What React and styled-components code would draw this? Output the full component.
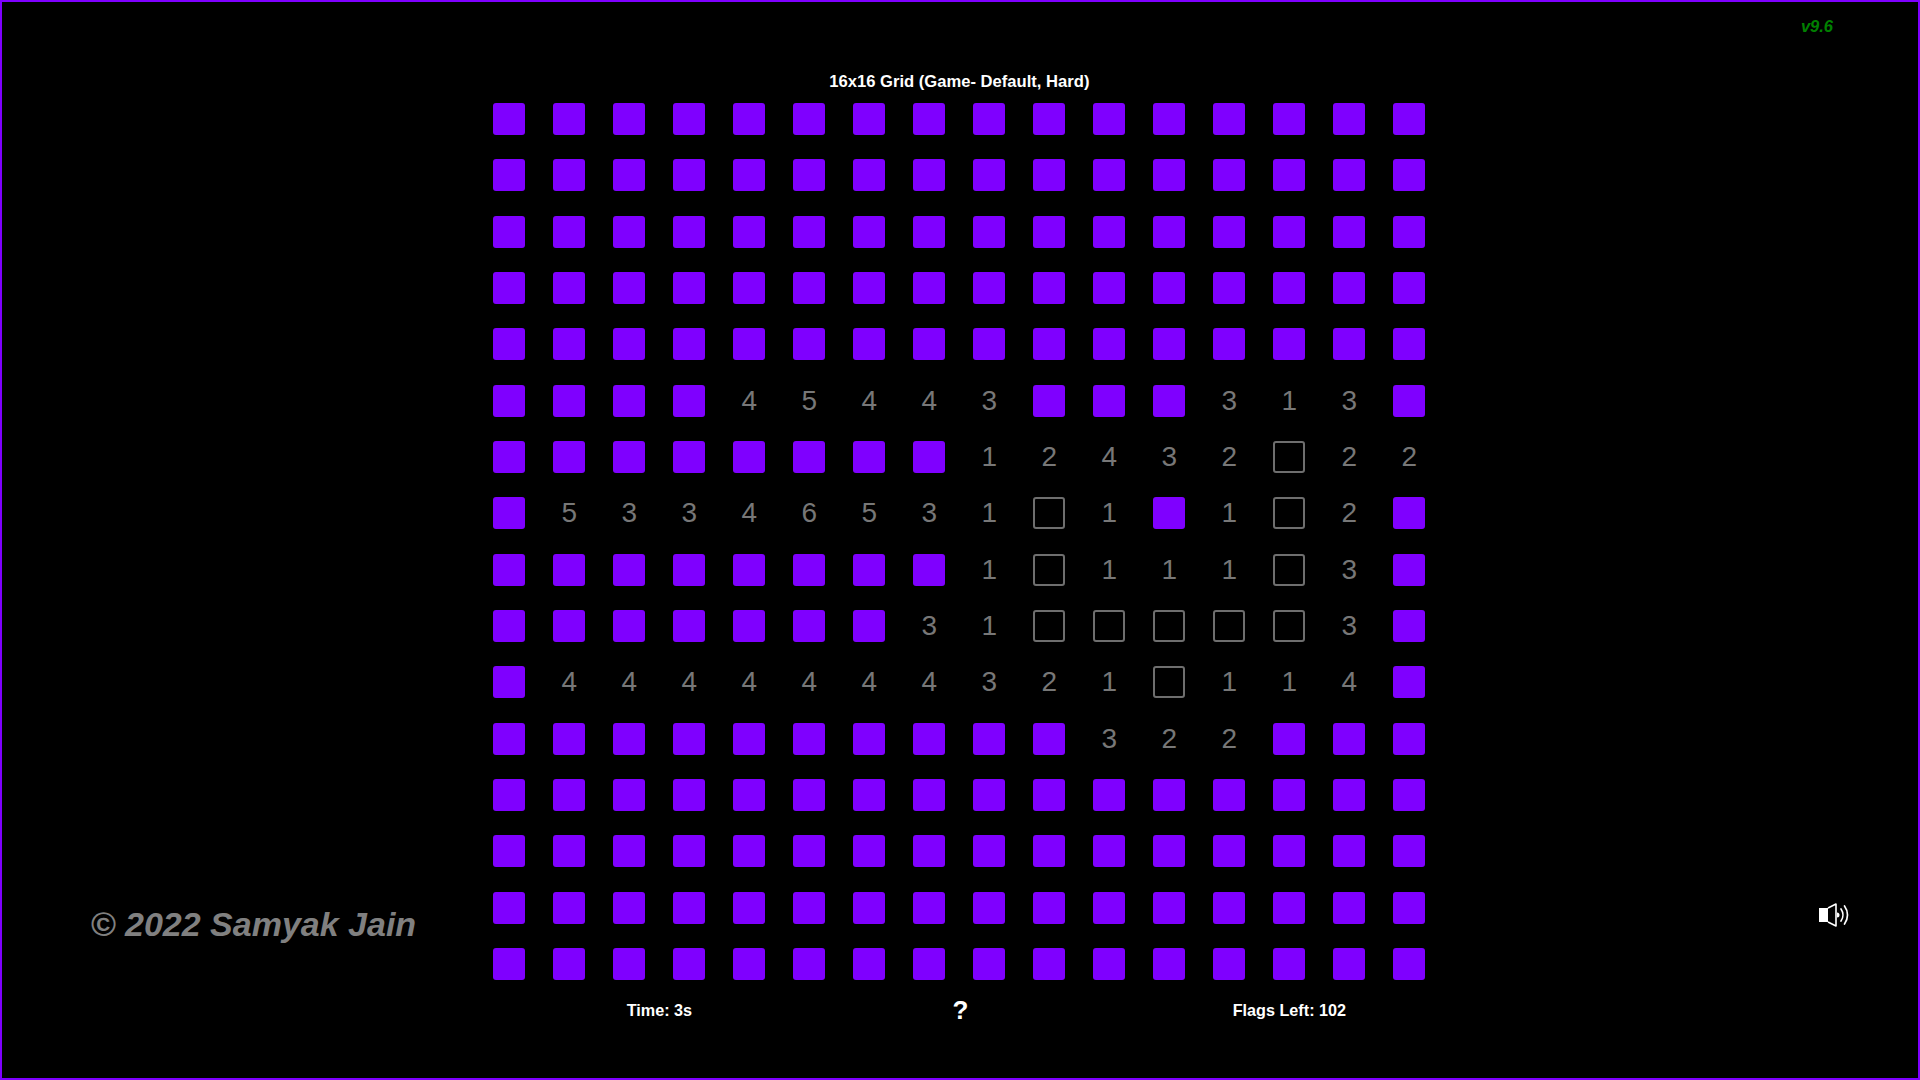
import React from "react";
import styled, { createGlobalStyle } from "styled-components";

const Global = createGlobalStyle`
  html, body { margin: 0; padding: 0; background: #000; }
  body { font-family: "Liberation Sans", Arial, sans-serif; }
  * { box-sizing: border-box; }
`;

const Page = styled.div`
  width: 1920px;
  height: 1080px;
  border: 2px solid #7f00ff;
  background: #000;
  display: grid;
  grid-template-columns: 477.4px 960px 1fr;
  overflow: hidden;
`;

const LeftSide = styled.aside`
  display: flex;
  align-items: flex-end;
  padding: 0 0 135px 88.5px;
`;

const Copyright = styled.div`
  color: #808080;
  font-size: 34px;
  font-weight: 700;
  font-style: italic;
  line-height: 38px;
  white-space: nowrap;
`;

const Center = styled.main`
  display: flex;
  flex-direction: column;
  padding-top: 70.5px;
`;

const Title = styled.h1`
  margin: 0;
  color: #fff;
  font-size: 16.6px;
  font-weight: 700;
  line-height: 18px;
  height: 18.4px;
  text-align: center;
`;

const Board = styled.div`
  display: grid;
  grid-template-columns: repeat(16, 60px);
  grid-auto-rows: 56.33px;
`;

const Cell = styled.div`
  display: flex;
  align-items: center;
  justify-content: center;
  color: #777;
  font-size: 28px;
  line-height: 32px;
`;

const Hidden = styled.div`
  width: 32px;
  height: 32px;
  border-radius: 3px;
  background: #7f00ff;
`;

const Empty = styled.div`
  width: 32px;
  height: 32px;
  border-radius: 3px;
  border: 2px solid #6e6e6e;
`;

const Footer = styled.footer`
  display: grid;
  grid-template-columns: 358px 244px 56px 302px;
  margin: 8.6px 0 0 1px;
  color: #fff;
  font-size: 16.2px;
  font-weight: 700;
  line-height: 18px;
  align-items: center;
`;

const FooterItem = styled.div`
  text-align: center;
`;

const FlagsItem = styled(FooterItem)`
  grid-column: 4;
`;

const Help = styled.span`
  display: block;
  font-size: 26px;
  line-height: 18px;
`;

const RightSide = styled.aside`
  display: flex;
  flex-direction: column;
  justify-content: space-between;
  align-items: flex-end;
  padding: 15px 85px 151px 0;
`;

const Version = styled.div`
  color: #008000;
  font-size: 16.5px;
  font-weight: 700;
  font-style: italic;
  line-height: 18px;
`;

const Sound = styled.svg`
  width: 31px;
  height: 24px;
  display: block;
  margin-right: -16px;
`;

const P = "P", B = "B";
const row = s => s.split("");
const allHidden = "PPPPPPPPPPPPPPPP";
const board = [
  allHidden, allHidden, allHidden, allHidden, allHidden,
  "PPPP45443PPP313P",
  "PPPPPPPP12432B22",
  "P53346531B1P1B2P",
  "PPPPPPPP1B111B3P",
  "PPPPPPP31BBBBB3P",
  "P4444444321B114P",
  "PPPPPPPPPP322PPP",
  allHidden, allHidden, allHidden, allHidden,
].map(row);

export default function App() {
  return (
    <Page>
      <Global />
      <LeftSide>
        <Copyright>© 2022 Samyak Jain</Copyright>
      </LeftSide>
      <Center>
        <Title>16x16 Grid (Game- Default, Hard)</Title>
        <Board>
          {board.flatMap((r, y) =>
            r.map((c, x) => (
              <Cell key={`${x}-${y}`}>
                {c === P ? <Hidden /> : c === B ? <Empty /> : c}
              </Cell>
            ))
          )}
        </Board>
        <Footer>
          <FooterItem>Time: 3s</FooterItem>
          <FooterItem><Help>?</Help></FooterItem>
          <FlagsItem>Flags Left: 102</FlagsItem>
        </Footer>
      </Center>
      <RightSide>
        <Version>v9.6</Version>
        <Sound viewBox="0 0 31 24">
          <path d="M1 5h9v14H1z" fill="#fff" />
          <path d="M10 5l8-4v22l-8-4" fill="none" stroke="#fff" strokeWidth="1.6" strokeLinejoin="round" />
          <path d="M19 9.500a2.500 2.500 0 0 1 0 5z" fill="#fff" />
          <path d="M23 6c2.500 3.500 2.500 8.500 0 12M26.500 3c4 5.500 4 12.500 0 18" fill="none" stroke="#fff" strokeWidth="1.7" strokeLinecap="round" />
        </Sound>
      </RightSide>
    </Page>
  );
}
